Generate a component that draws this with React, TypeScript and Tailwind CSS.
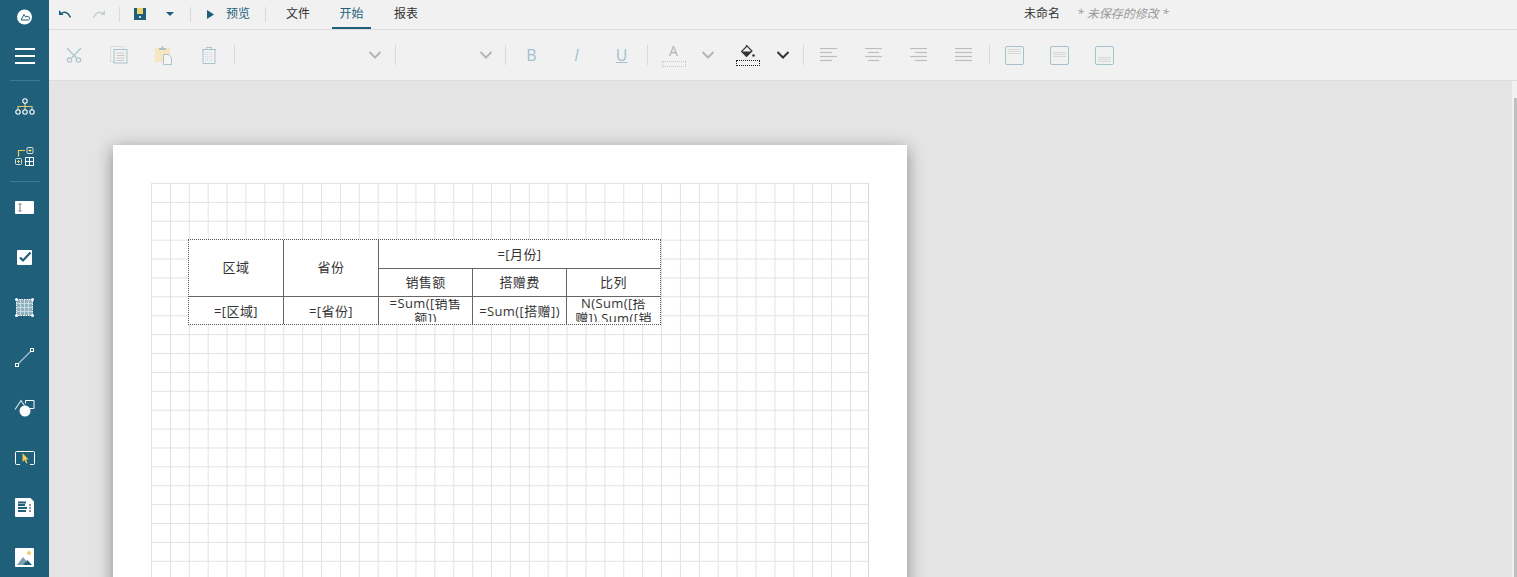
import React from 'react';

const TEAL = '#1f5f7a';
const MUTED = '#a9c3ce';

function Sep({ tight }: { tight?: boolean }) {
  return <div className={`ml-[3px] h-[20px] w-px shrink-0 bg-[#d9d9d9] ${tight ? 'mr-[2px]' : 'mr-[3px]'}`} />;
}

function TopSep({ className }: { className: string }) {
  return <div className={`h-[15px] w-px shrink-0 bg-[#d9d9d9] ${className}`} />;
}

function Chevron({ color }: { color: string }) {
  return (
    <svg width="14" height="10" viewBox="0 0 14 10" fill="none" stroke={color} strokeWidth="2">
      <path d="M1.5 2 7 7.5 12.5 2" />
    </svg>
  );
}

function Btn({ children }: { children: React.ReactNode }) {
  return <div className="flex h-full w-[45px] shrink-0 items-center justify-center">{children}</div>;
}

function AlignIcon({ lines }: { lines: Array<[number, number]> }) {
  return (
    <svg width="17" height="14" viewBox="0 0 17 14" stroke="#bdbdbd" strokeWidth="1.200">
      {lines.map(([x1, x2], i) => (
        <line key={i} x1={x1} x2={x2} y1={0.5 + i * 4} y2={0.5 + i * 4} />
      ))}
    </svg>
  );
}

function BoxIcon({ y }: { y: number }) {
  return (
    <svg width="19" height="19" viewBox="0 0 19 19" fill="none">
      <rect x="0.500" y="0.500" width="18" height="18" rx="1.500" stroke="#a3c0cc" />
      <path d={`M3 ${y}h13M3 ${y + 2}h13M3 ${y + 4}h13`} stroke="#d8d8d8" />
    </svg>
  );
}

function RibbonIcons() {
  return (
    <>
      <Btn>
        <svg width="16" height="16" viewBox="0 0 16 16" fill="none" stroke={MUTED} strokeWidth="1.200">
          <path d="M1 1l9.500 10M15 1 5.500 11" />
          <circle cx="3.500" cy="13" r="2.200" />
          <circle cx="12.500" cy="13" r="2.200" />
        </svg>
      </Btn>
      <Btn>
        <svg width="18" height="18" viewBox="0 0 18 18" fill="none">
          <path d="M4 15.500H.5V.5H13V3" stroke="#d3dfe4" />
          <rect x="4" y="3.500" width="13" height="13.500" stroke={MUTED} />
          <path d="M6.500 7h8M6.500 9.500h8M6.500 12h8M6.500 14.500h8" stroke="#c9c9c9" />
        </svg>
      </Btn>
      <Btn>
        <svg width="18" height="19" viewBox="0 0 18 19" fill="none">
          <rect x="0" y="2" width="15" height="14" fill="#f5e6bf" />
          <path d="M4 4V2h2.500V0.500h2V2H11v2z" fill={MUTED} />
          <path d="M8.500 8.500h5l3 3v7h-8z" fill="#f4f4f4" stroke={MUTED} />
        </svg>
      </Btn>
      <Btn>
        <svg width="16" height="18" viewBox="0 0 16 18" fill="none" stroke={MUTED}>
          <path d="M1 3.500h14M5.500 3.500V1.500h5v2" />
          <path d="M2 3.500v14h12v-14" />
          <path d="M4.500 6v9M6.500 6v9M8.500 6v9M10.500 6v9" stroke="#d5d5d5" strokeDasharray="1 1" />
        </svg>
      </Btn>
    </>
  );
}

function SideIcon({ children }: { children: React.ReactNode }) {
  return <div className="flex h-[50px] w-full shrink-0 items-center justify-center pt-px">{children}</div>;
}

function Sidebar() {
  return (
    <div className="flex h-full w-[49px] shrink-0 flex-col items-center overflow-hidden bg-[#1f5f7a]">
      <div className="flex h-[30px] shrink-0 items-center justify-center pt-[3px]">
        <svg width="17" height="17" viewBox="0 0 17 17">
          <circle cx="8.500" cy="9" r="7.500" fill="#fff" />
          <path d="M1.500 4.500a8.500 8.500 0 0 1 3-3" fill="none" stroke={TEAL} strokeWidth="0.800" />
          <path d="M8 6.500 5 12h7.500a1.700 1.700 0 0 0-.3-3.300 2 2 0 0 0-2.600.3z" fill="none" stroke={TEAL} strokeWidth="1" />
        </svg>
      </div>
      <SideIcon>
        <svg width="20" height="16" viewBox="0 0 20 16" fill="#fff">
          <rect y="0" width="20" height="2" />
          <rect y="7" width="20" height="2" />
          <rect y="14" width="20" height="2" />
        </svg>
      </SideIcon>
      <div className="h-px w-[30px] shrink-0 bg-[#3f7890]" />
      <SideIcon>
        <svg width="20" height="17" viewBox="0 0 20 17" fill="none">
          <path d="M3 12V8.500h14V12M10 5v7" stroke="#d9c77f" strokeWidth="1.200" />
          <circle cx="10" cy="3" r="2.200" stroke="#fff" strokeWidth="1.100" />
          <circle cx="3" cy="14" r="2.200" stroke="#fff" strokeWidth="1.100" />
          <circle cx="10" cy="14" r="2.200" stroke="#fff" strokeWidth="1.100" />
          <circle cx="17" cy="14" r="2.200" stroke="#fff" strokeWidth="1.100" />
        </svg>
      </SideIcon>
      <SideIcon>
        <svg width="19" height="19" viewBox="0 0 19 19" fill="none">
          <path d="M3.500 9.500V3.500H10" stroke="#f0cc5a" strokeWidth="1.200" />
          <rect x="12" y="0.500" width="6" height="6" rx="1" fill={TEAL} stroke="#cfe0e6" />
          <path d="M15 2v3M13.500 3.500h3" stroke="#f0cc5a" />
          <rect x="0.500" y="11.500" width="6" height="6" rx="1" fill={TEAL} stroke="#cfe0e6" />
          <path d="M3.500 13v3M2 14.500h3" stroke="#f0cc5a" />
          <path d="M10.500 10.500h8v8h-8zM14.500 10.500v8M10.500 14.500h8" stroke="#fff" strokeWidth="1" />
        </svg>
      </SideIcon>
      <div className="h-px w-[30px] shrink-0 bg-[#3f7890]" />
      <SideIcon>
        <svg width="19" height="13" viewBox="0 0 19 13">
          <rect width="19" height="13" rx="1" fill="#fff" />
          <path d="M3.500 3h3M3.500 10h3M5 3v7" stroke="#777" strokeWidth="1" fill="none" />
        </svg>
      </SideIcon>
      <SideIcon>
        <svg width="15" height="15" viewBox="0 0 15 15">
          <rect width="15" height="15" rx="1" fill="#fff" />
          <path d="M3 7.500 6 10.500 13.500 2.500" stroke={TEAL} strokeWidth="2.200" fill="none" />
        </svg>
      </SideIcon>
      <SideIcon>
        <svg width="19" height="19" viewBox="0 0 19 19">
          <rect x="1.500" y="1.500" width="16" height="16" fill="#8fb0bd" />
          <path d="M1.500 5.500h16M1.500 9.500h16M1.500 13.500h16M5.500 1.500v16M9.500 1.500v16M13.500 1.500v16" stroke="#d5e2e7" strokeWidth="0.800" />
          <path d="M1.500 1.500h16v16h-16z" fill="none" stroke="#fff" strokeWidth="1" strokeDasharray="1.500 1" />
          {[[1.500, 1.500], [17.500, 1.500], [1.500, 17.500], [17.500, 17.500]].map(([cx, cy]) => (
            <circle key={`${cx}-${cy}`} cx={cx} cy={cy} r="1.500" fill="#fff" />
          ))}
        </svg>
      </SideIcon>
      <SideIcon>
        <svg width="19" height="19" viewBox="0 0 19 19" fill="none">
          <path d="M2 17 17 2" stroke="#a9c3ce" strokeWidth="1.200" />
          <rect x="0.500" y="15.500" width="3" height="3" fill={TEAL} stroke="#fff" />
          <rect x="15.500" y="0.500" width="3" height="3" fill={TEAL} stroke="#fff" />
        </svg>
      </SideIcon>
      <SideIcon>
        <svg width="21" height="19" viewBox="0 -1 21 19" fill="none">
          <path d="M1 10.500 7 1.500l4 6" stroke="#d5e2e7" strokeWidth="1.200" />
          <path d="M11.500 1.500h8.500v8h-4" stroke="#fff" strokeWidth="1" />
          <path d="M11.500 1.500v3" stroke="#fff" strokeWidth="1" />
          <circle cx="11" cy="12" r="5.500" fill="#fff" />
        </svg>
      </SideIcon>
      <SideIcon>
        <svg width="20" height="14" viewBox="0 0 20 14" fill="none">
          <path d="M5 13.500H1.500a1 1 0 0 1-1-1v-11a1 1 0 0 1 1-1h17a1 1 0 0 1 1 1v11a1 1 0 0 1-1 1H15" stroke="#fff" />
          <path d="M7.500 2v9l2-2 1.800 3.500 1.200-.6L11 8.500h2.500z" fill="#eec75f" />
        </svg>
      </SideIcon>
      <SideIcon>
        <svg width="19" height="19" viewBox="0 0 19 19">
          <path d="M1 0h14.500L19 3.500V18a1 1 0 0 1-1 1H1a1 1 0 0 1-1-1V1a1 1 0 0 1 1-1z" fill="#fff" />
          <path d="M3 4.500h8M3 7h7M3 10h9M3 13h8" stroke={TEAL} strokeWidth="1.800" />
          <path d="M14 7h2M14 10h2M14 13h2" stroke="#999" strokeWidth="1.800" />
        </svg>
      </SideIcon>
      <SideIcon>
        <svg width="19" height="19" viewBox="0 0 19 19">
          <rect width="19" height="19" rx="1" fill="#fff" />
          <circle cx="14" cy="5" r="2" fill="#f0cc6a" />
          <path d="M2 17 8 9l3.500 4-2 4z" fill="#7d9fae" />
          <path d="M8 17l4.500-5 4.500 5z" fill={TEAL} />
        </svg>
      </SideIcon>
    </div>
  );
}

function TopBar() {
  return (
    <div className="flex h-[30px] shrink-0 items-center border-b border-[#dcdcdc] bg-[#f1f1f1] pb-px pl-[9px] text-[12px] text-[#333]">
      <div className="flex w-[14px] justify-center">
        <svg width="12" height="8" viewBox="0 0 12 8">
          <path d="M0 0v5h4.500z" fill={TEAL} />
          <path d="M2 4C5 1 9 2 11.500 7.500" fill="none" stroke={TEAL} strokeWidth="1.500" />
        </svg>
      </div>
      <div className="ml-[20px] flex w-[14px] justify-center">
        <svg width="12" height="8" viewBox="0 0 12 8">
          <path d="M12 0v5H7.500z" fill="#c3cfd4" />
          <path d="M10 4C7 1 3 2 .5 7.500" fill="none" stroke="#c3cfd4" strokeWidth="1.500" />
        </svg>
      </div>
      <TopSep className="ml-[13px]" />
      <svg className="ml-[14px]" width="12" height="12" viewBox="0 0 12 12">
        <rect width="12" height="12" fill={TEAL} />
        <rect x="3" width="6" height="6" fill="#f2d16b" />
        <circle cx="6" cy="9" r="1" fill="#fff" />
      </svg>
      <svg className="ml-[20px]" width="8" height="4" viewBox="0 0 8 4">
        <path d="M0 0h8L4 4z" fill={TEAL} />
      </svg>
      <TopSep className="ml-[16px]" />
      <svg className="ml-[16px]" width="7" height="9" viewBox="0 0 7 9">
        <path d="M0 0v9l7-4.500z" fill={TEAL} />
      </svg>
      <span className="ml-[12px] text-[#1f5f7a]">预览</span>
      <TopSep className="ml-[15px]" />
      <span className="ml-[20px]">文件</span>
      <div className="relative ml-[22px] flex h-full w-[39px] items-center justify-center text-[#1f5f7a]">
        开始
        <div className="absolute right-0 -bottom-px left-0 h-[2px] bg-[#1f5f7a]" />
      </div>
      <span className="ml-[23px]">报表</span>
      <span className="ml-[606px]">未命名</span>
      <span className="ml-[17px] text-[#999] italic">* 未保存的修改 *</span>
    </div>
  );
}

function Ribbon() {
  return (
    <div className="flex h-[51px] shrink-0 items-center border-b border-[#dcdcdc] bg-[#f1f1f1] pl-[2px]">
      <RibbonIcons />
      <Sep />
      <div className="flex h-full w-[154px] shrink-0 items-center justify-end pr-[10px]">
        <Chevron color="#b5b5b5" />
      </div>
      <Sep />
      <div className="flex h-full w-[103px] shrink-0 items-center justify-end pr-[9px]">
        <Chevron color="#b5b5b5" />
      </div>
      <Sep />
      <Btn>
        <span className="text-[16px] text-[#a3bfca]">B</span>
      </Btn>
      <Btn>
        <span className="text-[16px] text-[#a3bfca] italic">I</span>
      </Btn>
      <Btn>
        <span className="text-[16px] text-[#a3bfca] underline">U</span>
      </Btn>
      <Sep />
      <Btn>
        <div className="flex flex-col items-center">
          <span className="text-[14px] leading-[14px] text-[#b5b5b5]">A</span>
          <div className="mt-[3px] h-[6px] w-[24px] rounded-[1px] border border-dotted border-[#c8c8c8]" />
        </div>
      </Btn>
      <div className="mr-[5px] flex w-[24px] shrink-0 justify-center">
        <Chevron color="#b5b5b5" />
      </div>
      <Btn>
        <div className="flex flex-col items-center">
          <svg width="14" height="14" viewBox="0 0 14 14">
            <path d="M5 0l1 1L0.500 6.500 5.500 11.500 11 6 6 1" fill="none" stroke="#333" strokeWidth="1.100" />
            <path d="M1 6.500h10l-5.500 5z" fill="#333" />
            <circle cx="12.500" cy="10.500" r="1.300" fill="#333" />
          </svg>
          <div className="mt-[1px] h-[6px] w-[24px] rounded-[1px] border border-dotted border-[#222]" />
        </div>
      </Btn>
      <div className="mr-[4px] flex w-[26px] shrink-0 justify-center">
        <Chevron color="#333" />
      </div>
      <Sep tight />
      <Btn>
        <AlignIcon lines={[[0, 17], [0, 12], [0, 17], [0, 12]]} />
      </Btn>
      <Btn>
        <AlignIcon lines={[[0, 17], [3, 14], [0, 17], [3, 14]]} />
      </Btn>
      <Btn>
        <AlignIcon lines={[[0, 17], [5, 17], [0, 17], [5, 17]]} />
      </Btn>
      <Btn>
        <AlignIcon lines={[[0, 17], [0, 17], [0, 17], [0, 17]]} />
      </Btn>
      <Sep tight />
      <Btn>
        <BoxIcon y={3.500} />
      </Btn>
      <Btn>
        <BoxIcon y={6.500} />
      </Btn>
      <Btn>
        <BoxIcon y={11.500} />
      </Btn>
    </div>
  );
}

function Cell({ children, className, rowSpan, colSpan }: { children: React.ReactNode; className: string; rowSpan?: number; colSpan?: number }) {
  return (
    <td rowSpan={rowSpan} colSpan={colSpan} className={`p-0 align-middle ${className}`}>
      {children}
    </td>
  );
}

// the report cells clip what doesn't fit, 2px inside the border
function Clip({ children, h }: { children: React.ReactNode; h: string }) {
  return (
    <div className={`p-[2px] text-center leading-[15px] ${h}`}>
      <div className="flex h-full items-center justify-center overflow-hidden">
        <div>{children}</div>
      </div>
    </div>
  );
}

function ReportTable() {
  const line = 'border-[#666]';
  return (
    <table className="w-[473px] table-fixed border-separate border-spacing-0 border border-dotted border-[#555] bg-white text-[13px] tracking-[0.4px] text-[#333]">
      <colgroup>
        <col className="w-[95px]" />
        <col className="w-[95px]" />
        <col className="w-[94px]" />
        <col className="w-[94px]" />
        <col className="w-[93px]" />
      </colgroup>
      <tbody>
        <tr>
          <Cell rowSpan={2} className={`border-r border-b ${line}`}>
            <div className="text-center">区域</div>
          </Cell>
          <Cell rowSpan={2} className={`border-r border-b ${line}`}>
            <div className="text-center">省份</div>
          </Cell>
          <Cell colSpan={3} className={`border-b ${line}`}>
            <Clip h="h-[28px]">=[月份]</Clip>
          </Cell>
        </tr>
        <tr>
          <Cell className={`border-r border-b ${line}`}>
            <Clip h="h-[27px]">销售额</Clip>
          </Cell>
          <Cell className={`border-r border-b ${line}`}>
            <Clip h="h-[27px]">搭赠费</Clip>
          </Cell>
          <Cell className={`border-b ${line}`}>
            <Clip h="h-[27px]">比列</Clip>
          </Cell>
        </tr>
        <tr>
          <Cell className={`border-r ${line}`}>
            <Clip h="h-[27px]">
              <div className="pt-[2px]">=[区域]</div>
            </Clip>
          </Cell>
          <Cell className={`border-r ${line}`}>
            <Clip h="h-[27px]">
              <div className="pt-[2px]">=[省份]</div>
            </Clip>
          </Cell>
          <Cell className={`border-r ${line}`}>
            <Clip h="h-[27px]">=Sum([销售额])</Clip>
          </Cell>
          <Cell className={`border-r ${line}`}>
            <Clip h="h-[27px]">
              <div className="pt-[2px]">=Sum([搭赠])</div>
            </Clip>
          </Cell>
          <Cell className="">
            <Clip h="h-[27px]">N(Sum([搭赠]),Sum([销</Clip>
          </Cell>
        </tr>
      </tbody>
    </table>
  );
}

export default function App() {
  return (
    <div className="flex h-[577px] w-[1517px] overflow-hidden bg-[#e4e4e4] font-['Open_Sans','Noto_Sans_CJK_SC',sans-serif]">
      <Sidebar />
      <div className="flex min-w-0 flex-1 flex-col">
        <TopBar />
        <Ribbon />
        <div className="flex min-h-0 flex-1">
          <div className="min-w-0 flex-1 overflow-hidden pt-[64px] pl-[64px]">
            <div className="h-[800px] w-[794px] bg-white pt-[38px] pl-[38px] shadow-[0_4px_16px_rgba(0,0,0,0.4)]">
              <div className="h-[700px] w-[718px] border-r border-[#d8d8d8] bg-[linear-gradient(to_right,#e2e2e2_1px,transparent_1px),linear-gradient(to_bottom,#e2e2e2_1px,transparent_1px)] bg-[length:18.9px_18.9px] pt-[56px] pl-[37px]">
                <ReportTable />
              </div>
            </div>
          </div>
          <div className="flex w-[5px] shrink-0 bg-[#f1f1f1] pt-[17px] pl-[2px]">
            <div className="h-full w-[3px] bg-[#c1c1c1]" />
          </div>
        </div>
      </div>
    </div>
  );
}
